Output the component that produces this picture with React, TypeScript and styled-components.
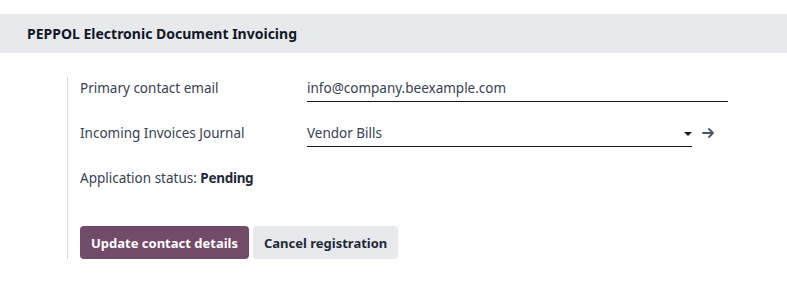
import React from "react";
import styled, { createGlobalStyle } from "styled-components";

const Global = createGlobalStyle`
  html, body { margin: 0; padding: 0; background: #ffffff; }
  body { font-family: "Noto Sans", "DejaVu Sans", sans-serif; font-size: 13.5px; color: #374151; }
  * { box-sizing: border-box; }
`;

const Page = styled.div`
  padding-top: 14px;
  width: 787px;
`;

const SectionHeader = styled.div`
  height: 39px;
  background: #e7e9ed;
  display: flex;
  align-items: center;
  padding-left: 27px;
  font-weight: 700;
  font-size: 14px;
  color: #111827;
`;

const Body = styled.div`
  padding: 24px 0 0 67px;
`;

const Group = styled.div`
  border-left: 1px solid #d8dadd;
  padding-left: 12px;
  display: flex;
  flex-direction: column;
`;

const FieldRow = styled.div<{ $gap?: number }>`
  display: grid;
  grid-template-columns: 227px 1fr;
  align-items: start;
  margin-bottom: ${(p) => p.$gap ?? 20}px;
`;

const Label = styled.div`
  height: 25px;
  line-height: 22px;
  color: #374151;
`;

const InputWrap = styled.div`
  display: flex;
  align-items: center;
`;

const Input = styled.div<{ $width: number }>`
  width: ${(p) => p.$width}px;
  height: 25px;
  border-bottom: 1px solid #111827;
  line-height: 22px;
  color: #374151;
  display: flex;
  justify-content: space-between;
  align-items: flex-start;
`;

const Caret = styled.span`
  width: 0;
  height: 0;
  border-left: 4px solid transparent;
  border-right: 4px solid transparent;
  border-top: 4px solid #111827;
  margin-top: 10px;
`;

const LinkArrow = styled.span`
  margin-left: 10px;
  display: flex;
  align-items: center;
  color: #4b5563;
  margin-top: -4px;
`;

const Status = styled.div`
  height: 22px;
  line-height: 22px;
  color: #374151;
  margin-top: -2px;
  b { color: #1f2937; font-weight: 700; letter-spacing: -0.3px; }
`;

const Buttons = styled.div`
  display: flex;
  gap: 4px;
  margin-top: 37px;
`;

const Button = styled.button<{ $primary?: boolean }>`
  height: 33px;
  padding: 0 11px;
  border: none;
  border-radius: 4px;
  font-family: inherit;
  font-size: 13px;
  font-weight: 700;
  background: ${(p) => (p.$primary ? "#714b67" : "#e7e9ed")};
  color: ${(p) => (p.$primary ? "#ffffff" : "#1f2937")};
`;

export default function App() {
  return (
    <>
      <Global />
      <Page>
        <SectionHeader>PEPPOL Electronic Document Invoicing</SectionHeader>
        <Body>
          <Group>
            <FieldRow>
              <Label>Primary contact email</Label>
              <InputWrap>
                <Input $width={421}>info@company.beexample.com</Input>
              </InputWrap>
            </FieldRow>
            <FieldRow $gap={22}>
              <Label>Incoming Invoices Journal</Label>
              <InputWrap>
                <Input $width={385}>
                  Vendor Bills
                  <Caret />
                </Input>
                <LinkArrow>
                  <svg width="13" height="12" viewBox="0 0 13 12">
                    <path d="M1 6h10M7 2l4 4-4 4" stroke="currentColor" strokeWidth="1.8" fill="none" strokeLinecap="round" strokeLinejoin="round" />
                  </svg>
                </LinkArrow>
              </InputWrap>
            </FieldRow>
            <Status>
              Application status: <b>Pending</b>
            </Status>
            <Buttons>
              <Button $primary>Update contact details</Button>
              <Button>Cancel registration</Button>
            </Buttons>
          </Group>
        </Body>
      </Page>
    </>
  );
}
